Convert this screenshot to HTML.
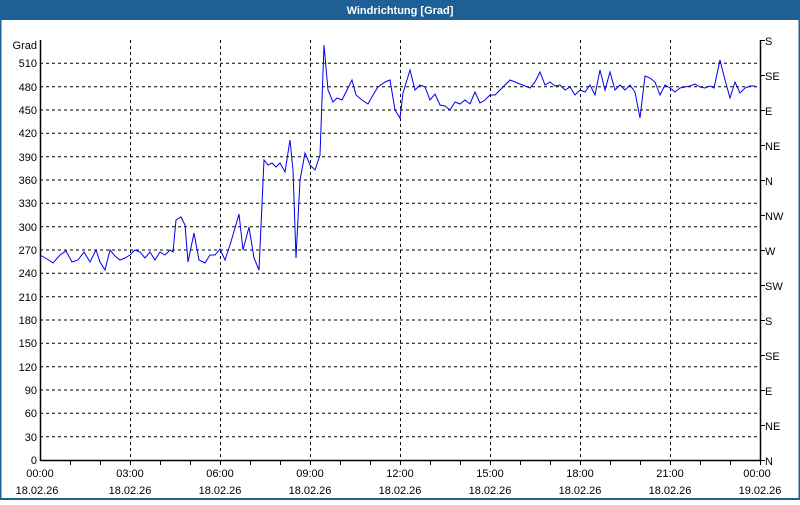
<!DOCTYPE html>
<html><head><meta charset="utf-8"><style>
html,body{margin:0;padding:0;background:#fff;}
body{width:800px;height:500px;overflow:hidden;font-family:"Liberation Sans",sans-serif;}
</style></head><body>
<svg width="800" height="500" xmlns="http://www.w3.org/2000/svg" font-family="Liberation Sans, sans-serif" font-size="11" fill="#000">
<rect x="0" y="0" width="800" height="500" fill="#fff"/>
<rect x="0" y="0" width="800" height="20" fill="#1e6096"/>
<rect x="0" y="0" width="1.5" height="500" fill="#1e6096"/>
<rect x="798.5" y="0" width="1.5" height="500" fill="#1e6096"/>
<rect x="0" y="498" width="800" height="2" fill="#1e6096"/>
<text x="400" y="14" fill="#fff" font-weight="bold" text-anchor="middle">Windrichtung [Grad]</text>
<g stroke="#000" stroke-width="1" stroke-dasharray="3,3" fill="none">
<path d="M40 63.3H760M40 86.7H760M40 110H760M40 133.3H760M40 156.7H760M40 180H760M40 203.3H760M40 226.7H760M40 250H760M40 273.3H760M40 296.7H760M40 320H760M40 343.3H760M40 366.7H760M40 390H760M40 413.3H760M40 436.7H760"/>
<path d="M130.5 40V460M220.5 40V460M310.5 40V460M400.5 40V460M490.5 40V460M580.5 40V460M670.5 40V460"/>
</g>
<g stroke="#000" stroke-width="1.5" fill="none">
<path d="M40.5 40V460.5H760.5V40"/>
</g>
<g stroke="#000" stroke-width="1">
<path d="M70.5 460V465M100.5 460V465M130.5 460V465M160.5 460V465M190.5 460V465M220.5 460V465M250.5 460V465M280.5 460V465M310.5 460V465M340.5 460V465M370.5 460V465M400.5 460V465M430.5 460V465M460.5 460V465M490.5 460V465M520.5 460V465M550.5 460V465M580.5 460V465M610.5 460V465M640.5 460V465M670.5 460V465M700.5 460V465M730.5 460V465M760.5 460V465"/>
<path d="M760 40.5H765M760 75.5H765M760 110.5H765M760 145.5H765M760 180.5H765M760 215.5H765M760 250.5H765M760 285.5H765M760 320.5H765M760 355.5H765M760 390.5H765M760 425.5H765M760 460.5H765"/>
</g>
<g text-anchor="end">
<text x="37" y="49">Grad</text>
<text x="37" y="67">510</text><text x="37" y="91">480</text><text x="37" y="114">450</text><text x="37" y="137">420</text><text x="37" y="161">390</text><text x="37" y="184">360</text><text x="37" y="207">330</text><text x="37" y="231">300</text><text x="37" y="254">270</text><text x="37" y="277">240</text><text x="37" y="301">210</text><text x="37" y="324">180</text><text x="37" y="347">150</text><text x="37" y="371">120</text><text x="37" y="394">90</text><text x="37" y="417">60</text><text x="37" y="441">30</text><text x="37" y="464">0</text>
</g>
<g>
<text x="765" y="45">S</text><text x="765" y="80">SE</text><text x="765" y="115">E</text><text x="765" y="150">NE</text><text x="765" y="185">N</text><text x="765" y="220">NW</text><text x="765" y="255">W</text><text x="765" y="290">SW</text><text x="765" y="325">S</text><text x="765" y="360">SE</text><text x="765" y="395">E</text><text x="765" y="430">NE</text><text x="765" y="465">N</text>
</g>
<g text-anchor="middle">
<text x="40" y="477">00:00</text><text x="130" y="477">03:00</text><text x="220" y="477">06:00</text><text x="310" y="477">09:00</text><text x="400" y="477">12:00</text><text x="490" y="477">15:00</text><text x="580" y="477">18:00</text><text x="670" y="477">21:00</text><text x="757" y="477">00:00</text>
<text x="37" y="494">18.02.26</text><text x="130" y="494">18.02.26</text><text x="220" y="494">18.02.26</text><text x="310" y="494">18.02.26</text><text x="400" y="494">18.02.26</text><text x="490" y="494">18.02.26</text><text x="580" y="494">18.02.26</text><text x="670" y="494">18.02.26</text><text x="760" y="494">19.02.26</text>
</g>
<polyline fill="none" stroke="#0000ee" stroke-width="1" points="40,255 47,259 53,263 60,255 66,251 72,262 78,260 84,252 90,262 96,250 100,262 105,270 110,250 115,256 120,260 125,258 130,255 135,250 140,252 145,258 150,252 155,260 160,252 165,255 170,250 173,252 176,220 181,217 185,225 188,262 194,233 199,260 205,263 210,255 215,255 220,249 225,260 230,245 235,228 239,214 243,250 249,227 254,258 259,270 264,160 268,165 272,163 276,167 280,163 285,172 290,140 293,170 296,258 300,180 305,153 310,165 315,170 320,155 324,45 328,90 333,102 337,98 342,100 347,90 352,80 356,95 362,100 368,104 373,95 378,87 385,82 390,80 395,110 400,118 403,93 410,70 415,90 420,85 425,87 430,100 435,94 440,105 445,106 450,110 455,102 460,104 465,100 470,104 475,92 480,103 485,100 490,95 495,95 500,90 505,85 510,80 515,82 520,84 525,86 530,88 535,82 540,72 545,85 550,82 555,86 560,85 565,90 570,87 575,95 580,90 585,92 590,85 595,95 600,70 605,90 610,72 615,90 620,85 625,90 630,85 635,92 640,118 645,76 650,78 655,82 660,95 665,85 670,88 675,92 680,88 685,87 690,86 695,84 700,87 705,88 710,86 714,88 720,60 725,80 730,98 735,82 740,93 745,88 750,86 755,86"/>
</svg>
</body></html>
